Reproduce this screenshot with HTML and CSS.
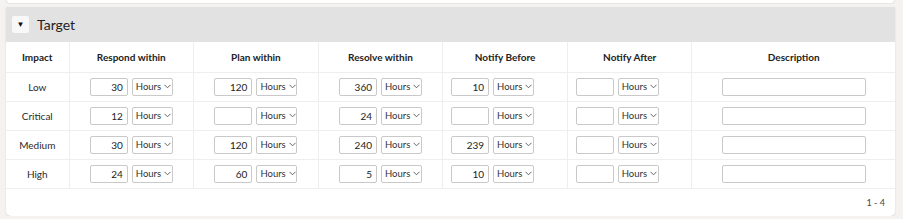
FILE: index.html
```html
<!DOCTYPE html>
<html lang="en">
<head>
  <meta charset="UTF-8" />
  <title>Target</title>
  <link rel="stylesheet" href="styles.css">
</head>
<body>

  <div class="top-card"></div>

  <div class="panel">
    <div class="panel-head">
      <button class="toggle">&#9660;</button>
      <span class="panel-title">Target</span>
    </div>

    <table class="grid">
      <colgroup>
        <col class="c-impact">
        <col class="c-time"><col class="c-time"><col class="c-time"><col class="c-time"><col class="c-time">
        <col class="c-desc">
      </colgroup>
      <thead>
        <tr>
          <th>Impact</th>
          <th>Respond within</th>
          <th>Plan within</th>
          <th>Resolve within</th>
          <th>Notify Before</th>
          <th>Notify After</th>
          <th>Description</th>
        </tr>
      </thead>
      <tbody id="rows"></tbody>
    </table>

    <div class="panel-foot">1 - 4</div>
  </div>

  <script>
    const data = [
      ['Low', '30', '120', '360', '10', ''],
      ['Critical', '12', '', '24', '', ''],
      ['Medium', '30', '120', '240', '239', ''],
      ['High', '24', '60', '5', '10', '']
    ];

    const chevron = '<svg width="7" height="5" viewBox="0 0 7 5"><path d="M0.5 0.8 L3.5 3.8 L6.5 0.8" fill="none" stroke="#555" stroke-width="0.9"/></svg>';

    // notify columns sit a bit left of centre in the original
    const cell = (val, i) =>
      '<td><div class="pair' + (i >= 3 ? ' notify' : '') + '"><span class="num">' + val + '</span>' +
      '<span class="unit">Hours' + chevron + '</span></div></td>';

    document.getElementById('rows').innerHTML = data.map(r =>
      '<tr><td>' + r[0] + '</td>' +
      r.slice(1).map(cell).join('') +
      '<td><span class="desc"></span></td></tr>'
    ).join('');
  </script>

</body>
</html>
```

FILE: styles.css
```css
* {
  box-sizing: border-box;
  font-family: 'Lato', 'Noto Sans', sans-serif;
}

body {
  margin: 0;
  background: #f4f3f1;
}

.top-card {
  margin: 0 8px 0 6px;
  height: 4px;
  background: #fff;
  border: 1px solid #e6e6e6;
  border-top: none;
  border-radius: 0 0 4px 4px;
}

.panel {
  margin: 3px 8px 0 6px;
  background: #fff;
  border-radius: 0 0 5px 5px;
  box-shadow: 0 1px 2px rgba(0,0,0,0.12);
  overflow: hidden;
}

.panel-head {
  height: 35px;
  background: #e2e2e2;
  display: flex;
  align-items: center;
  padding-left: 6px;
}

.toggle {
  width: 17px;
  height: 17px;
  padding: 0;
  border: none;
  border-radius: 2px;
  background: #f8f8f8;
  font-size: 8px;
  color: #111;
  line-height: 17px;
  cursor: pointer;
}

.panel-title {
  margin-left: 8px;
  font-size: 14px;
  color: #222;
}

.grid {
  width: 100%;
  border-collapse: collapse;
  table-layout: fixed;
}

.c-impact { width: 63px; }
.c-time { width: 124.6px; }
.c-desc { width: auto; }

.grid th,
.grid td {
  border-bottom: 1px solid #eeeeee;
  border-right: 1px solid #eeeeee;
  text-align: center;
  padding: 0;
  font-size: 10px;
  color: #2a2a2a;
}

.grid th:last-child,
.grid td:last-child {
  border-right: none;
}

.grid th {
  height: 30px;
  font-weight: bold;
  color: #222;
}

.grid td {
  height: 29px;
}

.pair {
  display: flex;
  justify-content: center;
  gap: 4px;
}

.pair.notify {
  margin-right: 25px;
}

.num,
.unit,
.desc {
  display: inline-block;
  height: 18px;
  border: 1px solid #c9c9c9;
  border-radius: 2px;
  background: #fff;
  font-size: 10px;
  line-height: 16px;
  color: #222;
}

.num {
  width: 38px;
  text-align: right;
  padding-right: 4px;
}

.unit {
  width: 41px;
  padding-left: 3px;
  display: flex;
  align-items: center;
  gap: 3px;
  font-size: 9.5px;
  color: #333;
}

.unit svg {
  flex-shrink: 0;
}

.desc {
  width: 144px;
  vertical-align: middle;
}

.panel-foot {
  height: 27px;
  text-align: right;
  padding-right: 10px;
  font-size: 9px;
  line-height: 28px;
  color: #444;
}
```
